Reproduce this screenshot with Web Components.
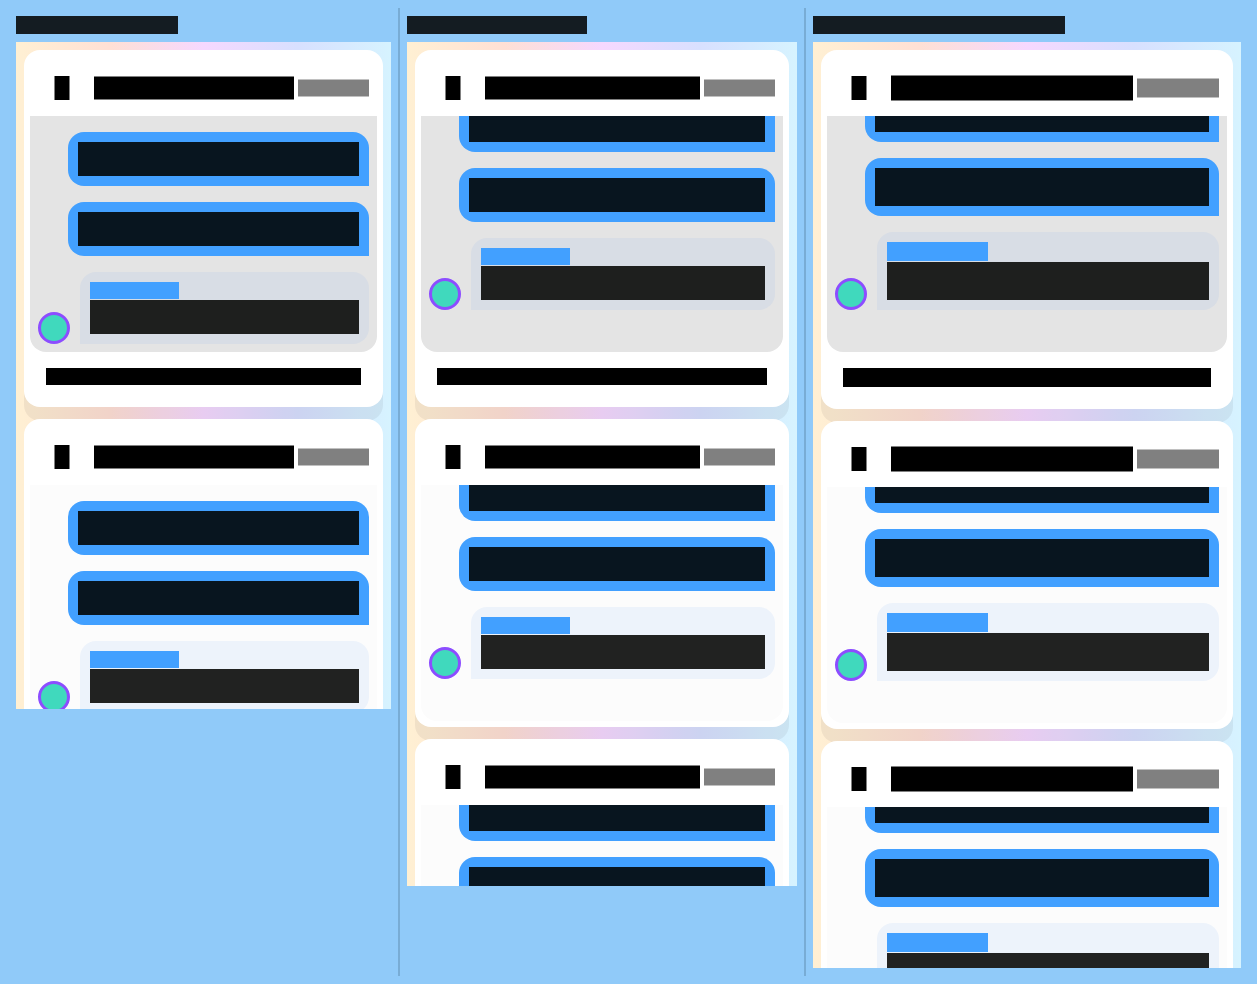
<!DOCTYPE html>
<html lang="en">
<head>
<meta charset="utf-8">
<meta name="viewport" content="width=device-width, initial-scale=1">
<title>Chat preview</title>
<style>
  html { background: #90caf9; }
  body { margin: 0; font-family: Roboto, sans-serif; }
</style>
</head>
<body>
<preview-board>
  <device-preview style="--label: 162px; --screen: 667px">
    <chat-card current closing></chat-card>
    <chat-card></chat-card>
  </device-preview>
  <device-preview style="--label: 180px; --screen: 844px; --tail: 42px">
    <chat-card current closing></chat-card>
    <chat-card></chat-card>
    <chat-card></chat-card>
  </device-preview>
  <device-preview style="--label: 252px; --screen: 926px; --tail: 42px; --line: 19px; --title: 24px; --aside: 82px; --name: 101px">
    <chat-card current closing></chat-card>
    <chat-card></chat-card>
    <chat-card></chat-card>
  </device-preview>
</preview-board>

<script>
const define = (name, html) => {
  const template = document.createElement('template');
  template.innerHTML = html;
  customElements.define(name, class extends HTMLElement {
    constructor() {
      super();
      this.attachShadow({ mode: 'open' }).append(template.content.cloneNode(true));
    }
  });
};

/* Row of device previews, parted by thin rules */
define('preview-board', `
  <style>
    :host {
      display: grid;
      grid-template-columns: 391fr 406fr 444fr;
      padding: 8px;
    }
    ::slotted(*) { padding: 8px; }
    ::slotted(:not(:first-child)) {
      border-left: 2px solid #78acd5;
      padding-left: 7px;
      margin-left: -1px;
    }
  </style>
  <slot></slot>`);

/* A label over one screen */
define('device-preview', `
  <style>
    :host { display: flex; flex-direction: column; gap: 8px; min-width: 0; }
    .label { width: var(--label); height: 18px; background: #141c22; }
    .screen {
      box-sizing: border-box;
      height: var(--screen);
      padding: 8px;
      overflow: hidden;
      display: flex;
      flex-direction: column;
      gap: 12px;
      background: linear-gradient(90deg, #fff0d3, #ffe0d5 25%, #f6d8ff 50%, #d8e0ff 75%, #d6f3ff);
    }
  </style>
  <div class="label"></div>
  <section class="screen"><slot></slot></section>`);

/* Message sent by the user */
define('sent-message', `
  <style>
    :host {
      display: block;
      flex: none;
      margin-left: 30px;
      padding: 10px;
      border-radius: 16px 16px 0 16px;
      background: #42a0ff;
    }
    .text { height: calc(2 * var(--line, 17px)); background: #08151f; }
  </style>
  <div class="text"></div>`);

/* Reply with an avatar and the sender's name */
define('received-message', `
  <style>
    :host { display: flex; flex: none; align-items: flex-end; gap: 10px; }
    .avatar {
      box-sizing: border-box;
      flex: none;
      width: 32px;
      height: 32px;
      border: 3px solid #8c4dff;
      border-radius: 50%;
      background: #40d9bd;
    }
    .bubble {
      flex: 1;
      padding: 10px;
      display: flex;
      flex-direction: column;
      gap: 1px;
      border-radius: 16px 16px 16px 0;
      background: var(--reply, #edf3fb);
    }
    .name { width: var(--name, 89px); height: var(--line, 17px); background: #42a0ff; }
    .text { height: calc(2 * var(--line, 17px)); background: var(--reply-text, #212221); }
  </style>
  <div class="avatar"></div>
  <div class="bubble"><div class="name"></div><div class="text"></div></div>`);

define('chat-card', `
  <style>
    :host {
      display: block;
      flex: none;
      padding: 0 6px 6px;
      border-radius: 16px;
      background: #fff;
      box-shadow: 0 14px 0 rgb(0 0 0 / .055);
    }
    :host([current]) { --log: #e4e4e4; --reply: #d8dde5; --reply-text: #1e1f1e; }
    header {
      display: flex;
      align-items: center;
      height: 66px;
      box-sizing: border-box;
      padding: 10px 8px 0 24px;
    }
    .icon {
      box-sizing: border-box;
      width: 16px;
      height: 24px;
      margin-right: 24px;
      border: solid #808080;
      border-width: 0 1px;
      background: #000;
    }
    .title {
      flex: 1;
      height: var(--title, 22px);
      margin-right: 4px;
      border: solid #808080;
      border-width: 1px 0;
      background: #000;
    }
    .aside {
      width: var(--aside, 71px);
      height: calc(var(--line, 17px) - 1px);
      border: solid #c0c0c0;
      border-width: 1px 0;
      background: #808080;
    }
    .log {
      box-sizing: border-box;
      height: 236px;
      padding: 0 8px var(--tail, 8px);
      overflow: hidden;
      display: flex;
      flex-direction: column;
      justify-content: flex-end;
      gap: 16px;
      border-radius: 0 0 16px 16px;
      background: var(--log, #fcfcfc);
    }
    footer { display: none; padding: 16px; }
    :host([closing]) footer { display: block; }
    .note { height: var(--line, 17px); background: #000; }
  </style>
  <header>
    <div class="icon"></div>
    <div class="title"></div>
    <div class="aside"></div>
  </header>
  <div class="log">
    <sent-message></sent-message>
    <sent-message></sent-message>
    <received-message></received-message>
  </div>
  <footer><div class="note"></div></footer>`);
</script>
</body>
</html>
